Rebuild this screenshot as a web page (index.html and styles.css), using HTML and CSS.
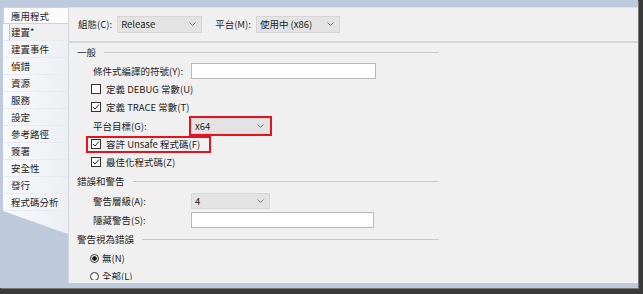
FILE: index.html
```html
<!DOCTYPE html>
<html lang="zh-Hant">

<head>
  <meta charset="UTF-8">
  <meta name="viewport" content="width=device-width, initial-scale=1.0">
  <title>建置</title>
  <link rel="stylesheet" href="styles.css">
</head>

<body>
  <div class="frame">
    <div class="side">
      <ul class="tabs">
        <li class="first">應用程式</li>
        <li class="on">建置*</li>
        <li>建置事件</li>
        <li>偵錯</li>
        <li>資源</li>
        <li>服務</li>
        <li>設定</li>
        <li>參考路徑</li>
        <li>簽署</li>
        <li>安全性</li>
        <li>發行</li>
        <li>程式碼分析</li>
      </ul>
    </div>

    <div class="panel">
      <div class="topbar">
        <span class="lbl">組態(C):</span>
        <div class="combo w85">Release<svg width="7" height="4" viewBox="0 0 7 4"><path d="M0.5 0.5 L3.5 3.5 L6.5 0.5" fill="none" stroke="#7a7a7a"/></svg></div>
        <span class="lbl gap">平台(M):</span>
        <div class="combo w84">使用中 (x86)<svg width="7" height="4" viewBox="0 0 7 4"><path d="M0.5 0.5 L3.5 3.5 L6.5 0.5" fill="none" stroke="#7a7a7a"/></svg></div>
      </div>

      <div class="content">
        <div class="grp first"><span>一般</span></div>
        <div class="row">
          <span class="name">條件式編譯的符號(Y):</span>
          <div class="field w185"></div>
        </div>
        <div class="chk"><span class="opt"><i class="box"></i>定義 DEBUG 常數(U)</span></div>
        <div class="chk"><span class="opt"><i class="box checked"></i>定義 TRACE 常數(T)</span></div>
        <div class="row">
          <span class="name">平台目標(G):</span>
          <div class="combo w79 hl">x64<svg width="7" height="4" viewBox="0 0 7 4"><path d="M0.5 0.5 L3.5 3.5 L6.5 0.5" fill="none" stroke="#7a7a7a"/></svg></div>
        </div>
        <div class="chk"><span class="opt hl"><i class="box checked"></i>容許 Unsafe 程式碼(F)</span></div>
        <div class="chk"><span class="opt"><i class="box checked"></i>最佳化程式碼(Z)</span></div>

        <div class="grp"><span>錯誤和警告</span></div>
        <div class="row">
          <span class="name">警告層級(A):</span>
          <div class="combo w79">4<svg width="7" height="4" viewBox="0 0 7 4"><path d="M0.5 0.5 L3.5 3.5 L6.5 0.5" fill="none" stroke="#7a7a7a"/></svg></div>
        </div>
        <div class="row">
          <span class="name">隱藏警告(S):</span>
          <div class="field w183"></div>
        </div>

        <div class="grp"><span>警告視為錯誤</span></div>
        <div class="chk"><span class="opt"><i class="radio checked"></i>無(N)</span></div>
        <div class="chk"><span class="opt"><i class="radio"></i>全部(L)</span></div>
      </div>
    </div>
  </div>
</body>

</html>
```

FILE: styles.css
```css
* {
  box-sizing: border-box;
}

html,
body {
  margin: 0;
}

body {
  width: 643px;
  height: 294px;
  overflow: hidden;
  background: #3a3a3a;
  font-family: "Noto Sans CJK TC", sans-serif;
  font-size: 9.5px;
  color: #1e1e1e;
}

.frame {
  display: flex;
  width: 638px;
  height: 288px;
  padding-top: 7px;
  padding-bottom: 4px;
  background: #bdcadb;
  box-shadow: 1px 1px 0 #777;
}

/* left tabs */
.side {
  width: 68px;
  padding-left: 3px;
}

.tabs {
  list-style: none;
  margin: 0;
  padding: 0 0 23px;
  background: linear-gradient(to right, #f8f9fb, #eceff3);
  clip-path: polygon(0 0, 100% 0, 100% 100%, 0 calc(100% - 23px));
}

.tabs li {
  height: 17px;
  line-height: 16px;
  padding-left: 8px;
  border-bottom: 1px solid #e7eaee;
  white-space: nowrap;
}

.tabs .first {
  padding-left: 7px;
  background: #fbfbfc;
  border: 1px solid #cdd3dc;
  border-right: none;
}

.tabs .on {
  background: linear-gradient(to right, transparent 6px, #eec35a 6px, #eec35a 7px, #f0f0f0 7px);
}

/* right panel */
.panel {
  flex: 1;
  display: flex;
  flex-direction: column;
  background: #f0f0f0;
  border-left: 1px solid #d3d8df;
  border-top: 1px solid #dde2e8;
  border-bottom: 1px solid #c8ced6;
  padding-bottom: 3px;
  overflow: hidden;
}

.topbar {
  display: flex;
  align-items: center;
  height: 35px;
  padding-left: 9px;
  padding-bottom: 1px;
  border-bottom: 2px solid #d7d7d7;
}

.lbl {
  margin-right: 5px;
}

.lbl.gap {
  margin-left: 13px;
}

.combo {
  display: flex;
  align-items: center;
  justify-content: space-between;
  height: 17px;
  padding: 0 5px 0 3px;
  background: #e3e3e3;
  border: 1px solid #d6d6d6;
  white-space: nowrap;
}

.combo svg {
  flex: none;
}

.w85 {
  width: 85px;
}

.w84 {
  width: 84px;
}

.w79 {
  width: 79px;
}

.w185 {
  width: 185px;
}

.w183 {
  width: 183px;
}

.combo.w79 {
  height: 15px;
}

.hl {
  outline: 2px solid #e2141f;
}

.field {
  height: 16px;
  background: #fff;
  border: 1px solid #b9b9b9;
}

.content {
  flex: 1;
  overflow: hidden;
}

.grp {
  display: flex;
  align-items: center;
  width: 370px;
  height: 20px;
  padding-left: 8px;
}

.grp.first {
  height: 18px;
}

.grp::after {
  content: '';
  flex: 1;
  height: 1px;
  margin-left: 8px;
  background: #c9c9c9;
}

.row {
  display: flex;
  align-items: center;
  height: 19px;
  padding-left: 24px;
}

.row .name {
  width: 98px;
  white-space: nowrap;
}

.row .field,
.row .combo {
  height: 16px;
}

.chk {
  display: flex;
  align-items: center;
  height: 18px;
  padding-left: 19px;
}

.opt {
  display: flex;
  align-items: center;
  height: 13px;
  padding: 0 3px;
  white-space: nowrap;
}

.opt.hl {
  padding-right: 9px;
}

.box {
  width: 10px;
  height: 10px;
  margin-right: 5px;
  background: #fff;
  border: 1px solid #333;
}

.box.checked {
  background: #fff url("data:image/svg+xml;utf8,<svg xmlns='http://www.w3.org/2000/svg' width='8' height='8' viewBox='0 0 8 8'><path d='M1 4 L3 6 L7 1.5' fill='none' stroke='%23222' stroke-width='1'/></svg>") center / 8px 8px no-repeat;
}

.radio {
  width: 9px;
  height: 9px;
  margin-right: 3px;
  margin-left: -1px;
  background: #fff;
  border: 1px solid #333;
  border-radius: 50%;
}

.radio.checked {
  background: radial-gradient(circle, #1e1e1e 0 2px, #fff 2.5px);
}
```
